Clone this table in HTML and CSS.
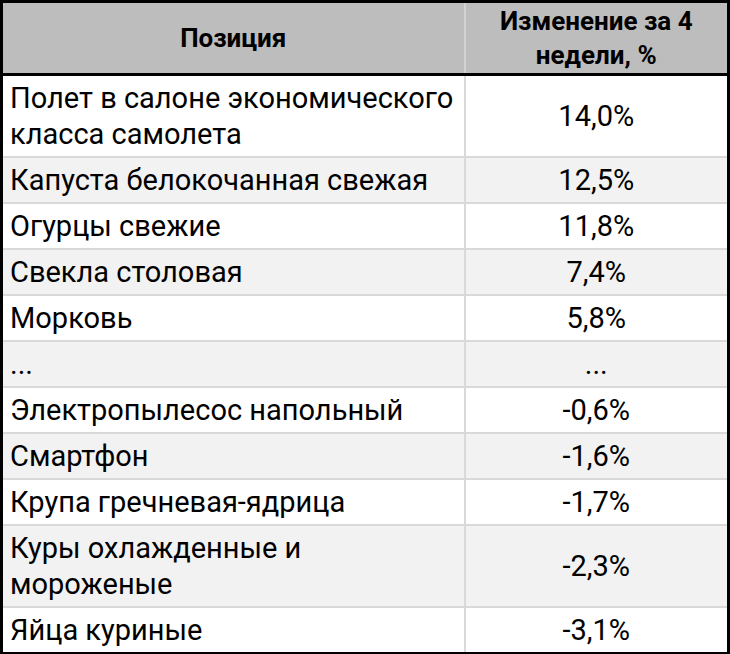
FILE: index.html
```html
<!DOCTYPE html>
<html lang="ru">
<head>
<meta charset="utf-8">
<link rel="stylesheet" href="styles.css">
</head>
<body>
<table class="tbl">
  <thead>
    <tr>
      <th class="c-name">Позиция</th>
      <th class="c-val">Изменение за 4<br>недели, %</th>
    </tr>
  </thead>
  <tbody>
    <tr><td class="c-name">Полет в салоне экономического класса самолета</td><td class="c-val">14,0%</td></tr>
    <tr><td class="c-name">Капуста белокочанная свежая</td><td class="c-val">12,5%</td></tr>
    <tr><td class="c-name">Огурцы свежие</td><td class="c-val">11,8%</td></tr>
    <tr><td class="c-name">Свекла столовая</td><td class="c-val">7,4%</td></tr>
    <tr><td class="c-name">Морковь</td><td class="c-val">5,8%</td></tr>
    <tr><td class="c-name">...</td><td class="c-val">...</td></tr>
    <tr><td class="c-name">Электропылесос напольный</td><td class="c-val">-0,6%</td></tr>
    <tr><td class="c-name">Смартфон</td><td class="c-val">-1,6%</td></tr>
    <tr><td class="c-name">Крупа гречневая-ядрица</td><td class="c-val">-1,7%</td></tr>
    <tr><td class="c-name">Куры охлажденные и мороженые</td><td class="c-val">-2,3%</td></tr>
    <tr><td class="c-name">Яйца куриные</td><td class="c-val">-3,1%</td></tr>
  </tbody>
</table>
</body>
</html>
```

FILE: styles.css
```css
html, body {
  margin: 0;
  padding: 0;
  background: #fff;
}
.tbl {
  width: 730px;
  border-collapse: collapse;
  border: 3px solid #000;
  border-bottom-width: 4px;
  font-family: Roboto, "Liberation Sans", sans-serif;
  color: #000;
  table-layout: fixed;
}
.tbl th {
  background: #bdbdbd;
  font-weight: bold;
  font-size: 26px;
  line-height: 34px;
  height: 73px;
  padding: 0 8px;
  border-bottom: 3px solid #000;
  border-left: 2px solid #d2d2d2;
  text-align: center;
  box-sizing: border-box;
}
.tbl td {
  font-size: 29px;
  line-height: 36px;
  padding: 4px 7px;
  height: 44px;
  box-sizing: border-box;
  border-top: 2px solid #d9d9d9;
  border-left: 2px solid #d9d9d9;
}
.tbl thead + tbody tr:first-child td {
  border-top: none;
}
.tbl .c-name {
  width: 463px;
  text-align: left;
}
.tbl th.c-name {
  text-align: center;
}
.tbl .c-val {
  text-align: center;
}
.tbl tbody tr:nth-child(even) td {
  background: #f2f2f2;
}
```
